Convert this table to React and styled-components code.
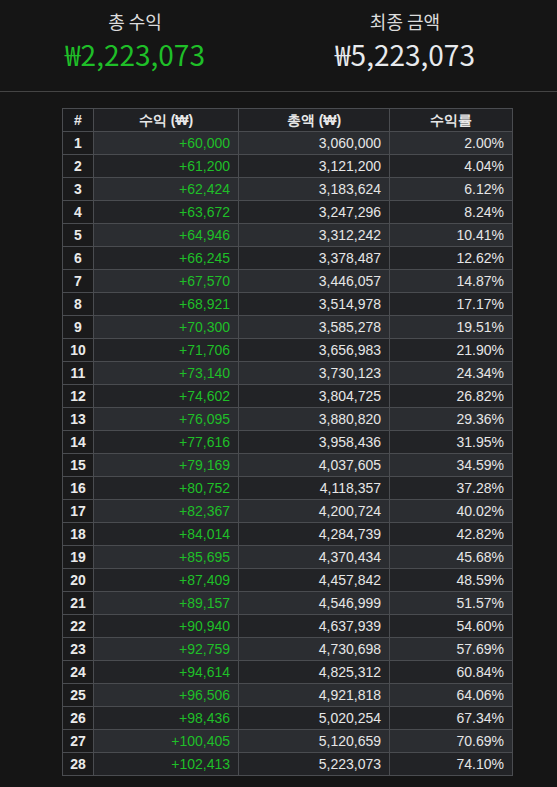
import React from 'react'
import styled, { createGlobalStyle } from 'styled-components'

const rows = [
  [60000, 3060000, '2.00'],
  [61200, 3121200, '4.04'],
  [62424, 3183624, '6.12'],
  [63672, 3247296, '8.24'],
  [64946, 3312242, '10.41'],
  [66245, 3378487, '12.62'],
  [67570, 3446057, '14.87'],
  [68921, 3514978, '17.17'],
  [70300, 3585278, '19.51'],
  [71706, 3656983, '21.90'],
  [73140, 3730123, '24.34'],
  [74602, 3804725, '26.82'],
  [76095, 3880820, '29.36'],
  [77616, 3958436, '31.95'],
  [79169, 4037605, '34.59'],
  [80752, 4118357, '37.28'],
  [82367, 4200724, '40.02'],
  [84014, 4284739, '42.82'],
  [85695, 4370434, '45.68'],
  [87409, 4457842, '48.59'],
  [89157, 4546999, '51.57'],
  [90940, 4637939, '54.60'],
  [92759, 4730698, '57.69'],
  [94614, 4825312, '60.84'],
  [96506, 4921818, '64.06'],
  [98436, 5020254, '67.34'],
  [100405, 5120659, '70.69'],
  [102413, 5223073, '74.10'],
]

const fmt = (n) => n.toLocaleString('en-US')

const App = () => {
  return (
    <Page>
      <GlobalStyle />
      <Summary>
        <Stat>
          <StatLabel>총 수익</StatLabel>
          <StatValue green>₩2,223,073</StatValue>
        </Stat>
        <Stat>
          <StatLabel>최종 금액</StatLabel>
          <StatValue>₩5,223,073</StatValue>
        </Stat>
      </Summary>
      <Divider />
      <Table>
        <colgroup>
          <col style={{ width: 31 }} />
          <col style={{ width: 145 }} />
          <col style={{ width: 151 }} />
          <col style={{ width: 123 }} />
        </colgroup>
        <thead>
          <tr>
            <IndexHead>#</IndexHead>
            <Head>수익 (₩)</Head>
            <Head>총액 (₩)</Head>
            <Head>수익률</Head>
          </tr>
        </thead>
        <tbody>
          {rows.map(([profit, total, rate], i) => (
            <Row key={i} odd={i % 2 === 0}>
              <IndexCell>{i + 1}</IndexCell>
              <Cell green>+{fmt(profit)}</Cell>
              <Cell>{fmt(total)}</Cell>
              <Cell>{rate}%</Cell>
            </Row>
          ))}
        </tbody>
      </Table>
    </Page>
  )
}

const GlobalStyle = createGlobalStyle`
  html, body {
    margin: 0;
    padding: 0;
    background: #151515;
  }
`

const Page = styled.div`
  width: 557px;
  min-height: 787px;
  background: #151515;
  color: #e6e6e6;
  padding-top: 8px;
  box-sizing: border-box;
`

const Summary = styled.div`
  width: 540px;
  display: grid;
  grid-template-columns: 1fr 1fr;
`

const Stat = styled.div`
  display: flex;
  flex-direction: column;
  align-items: center;
  font-family: "Noto Sans CJK KR", "Noto Sans", sans-serif;
`

const StatLabel = styled.div`
  font-size: 18px;
  line-height: 26px;
  color: #dcdcdc;
`

const StatValue = styled.div`
  font-size: 28px;
  line-height: 36px;
  margin-top: 2px;
  color: ${({ green }) => (green ? '#1fbf28' : '#e8eaed')};
`

const Divider = styled.div`
  height: 1px;
  background: #444;
  margin-top: 19px;
`

const Table = styled.table`
  margin: 16px 0 0 62px;
  width: 450px;
  border-collapse: collapse;
  table-layout: fixed;
  font-family: "Liberation Sans", Arial, sans-serif;
  font-size: 14px;
  line-height: 16px;
  border: 1px solid #4a4c50;

  th, td {
    border: 1px solid #4a4c50;
    padding: 3px 8px;
  }
`

const Head = styled.th`
  background: #202124;
  color: #e8e8e8;
  font-weight: bold;
  text-align: center;
`

const IndexHead = styled(Head)`
  background: #18191b;
  padding: 3px 0 !important;
`

const Row = styled.tr`
  background: ${({ odd }) => (odd ? '#2b2d31' : '#222326')};
`

const IndexCell = styled.td`
  background: #1a1a1b;
  font-weight: bold;
  text-align: center;
  color: #eaeaea;
  padding: 3px 0 !important;
`

const Cell = styled.td`
  text-align: right;
  color: ${({ green }) => (green ? '#1fbf28' : '#e6e6e6')};
`

export default App
